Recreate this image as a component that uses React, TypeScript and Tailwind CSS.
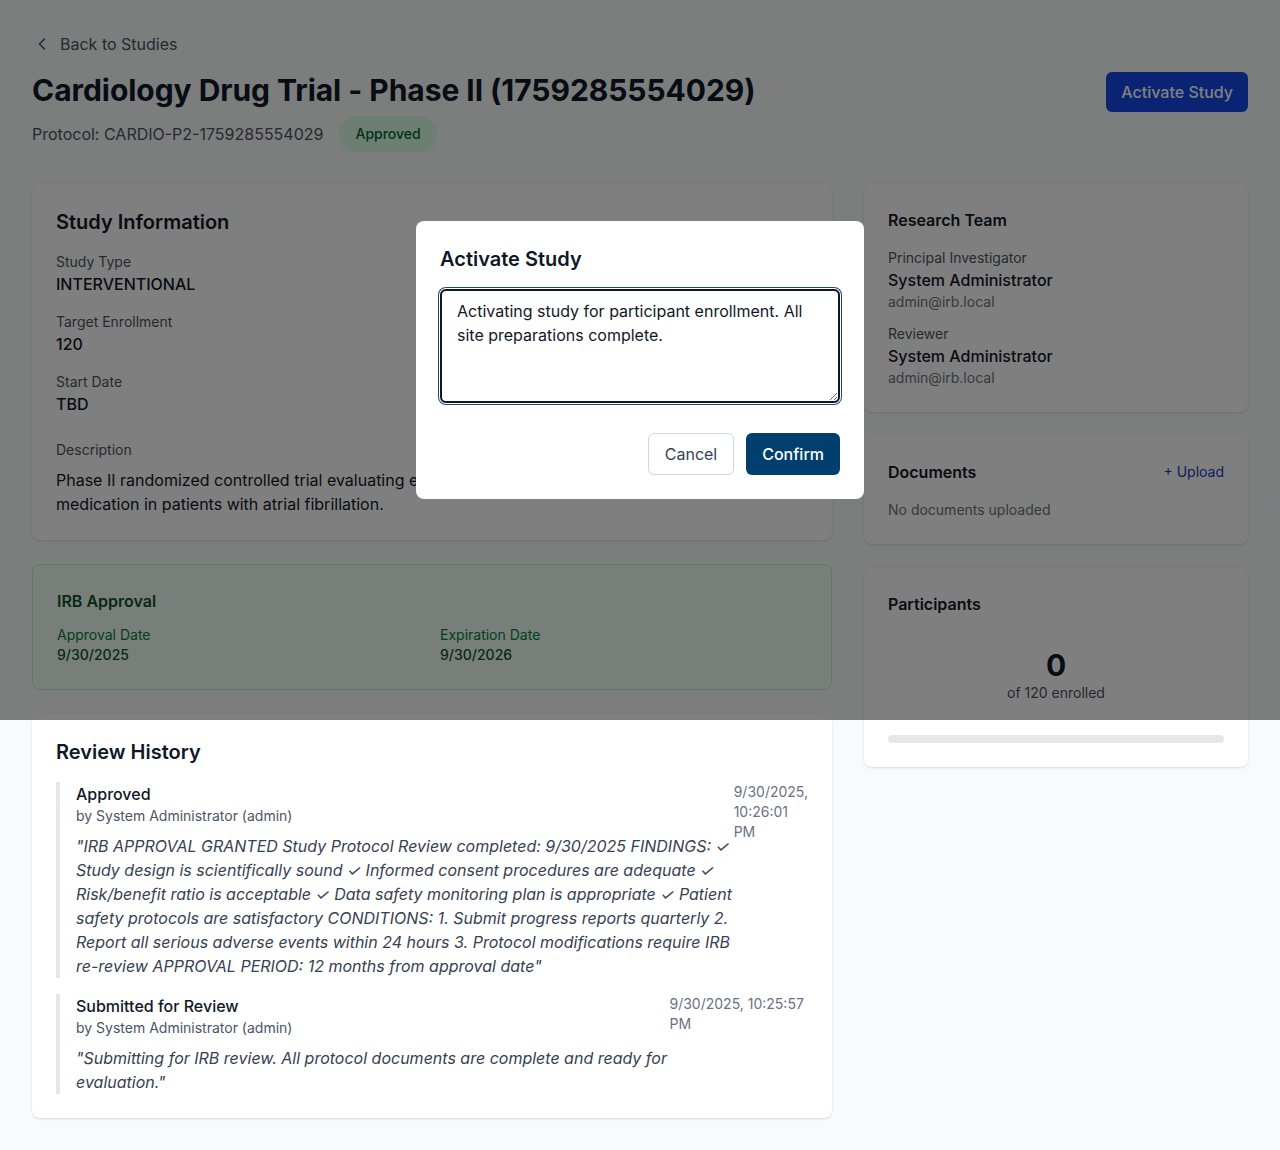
import React from "react";
import { ChevronLeft } from "lucide-react";

export default function App() {
  return (
    <div
      className="relative min-h-screen bg-gray-50 text-gray-900"
      style={{ fontFamily: "Inter, 'Noto Sans', sans-serif" }}
    >
      <div className="px-8 py-8">
        {/* Back link */}
        <div className="flex items-center text-base text-gray-600">
          <ChevronLeft size={20} className="mr-2" />
          <span>Back to Studies</span>
        </div>

        {/* Header */}
        <div className="mt-4 mb-8 flex items-start justify-between">
          <div>
            <h1 className="text-3xl font-bold tracking-[-0.05px] text-gray-900">
              Cardiology Drug Trial - Phase II (1759285554029)
            </h1>
            <div className="mt-2 flex items-center">
              <span className="text-base text-gray-600">Protocol: CARDIO-P2-1759285554029</span>
              <span className="ml-4 rounded-full bg-green-100 px-4 py-2 text-sm font-medium text-green-800">
                Approved
              </span>
            </div>
          </div>
          <button className="rounded-md bg-blue-700 px-[15px] py-2 text-base font-medium text-white">
            Activate Study
          </button>
        </div>

        {/* Main grid */}
        <div className="grid grid-cols-3 items-start gap-8">
          <div className="col-span-2 space-y-6">
            {/* Study Information */}
            <div className="rounded-lg bg-white p-6 shadow-sm">
              <h2 className="mb-4 text-xl font-semibold">Study Information</h2>
              <div className="space-y-4">
                <div>
                  <div className="text-sm text-gray-600">Study Type</div>
                  <div className="text-base font-medium">INTERVENTIONAL</div>
                </div>
                <div>
                  <div className="text-sm text-gray-600">Target Enrollment</div>
                  <div className="text-base font-medium">120</div>
                </div>
                <div>
                  <div className="text-sm text-gray-600">Start Date</div>
                  <div className="text-base font-medium">TBD</div>
                </div>
              </div>
              <div className="mt-6">
                <div className="text-sm text-gray-600">Description</div>
                <p className="mt-2 text-base leading-6 text-gray-900">
                  Phase II randomized controlled trial evaluating efficacy and safety of novel oral anticoagulant
                  medication in patients with atrial fibrillation.
                </p>
              </div>
            </div>

            {/* IRB Approval */}
            <div className="rounded-lg border border-green-200 bg-green-50 p-6">
              <h3 className="mb-3 text-base font-semibold text-green-900">IRB Approval</h3>
              <div className="grid grid-cols-2 gap-4">
                <div>
                  <div className="text-sm text-green-700">Approval Date</div>
                  <div className="text-sm font-medium text-green-900">9/30/2025</div>
                </div>
                <div>
                  <div className="text-sm text-green-700">Expiration Date</div>
                  <div className="text-sm font-medium text-green-900">9/30/2026</div>
                </div>
              </div>
            </div>

            {/* Review History */}
            <div className="rounded-lg bg-white p-6 shadow-sm">
              <h2 className="mb-4 text-xl font-semibold">Review History</h2>
              <div className="space-y-4">
                <div className="border-l-4 border-gray-200 pl-4">
                  <div className="flex justify-between">
                    <div>
                      <div className="text-base font-medium">Approved</div>
                      <div className="text-sm text-gray-600">by System Administrator (admin)</div>
                      <p className="mt-2 text-base italic leading-6 text-gray-700">
                        "IRB APPROVAL GRANTED Study Protocol Review completed: 9/30/2025 FINDINGS: ✓ Study design is
                        scientifically sound ✓ Informed consent procedures are adequate ✓ Risk/benefit ratio is
                        acceptable ✓ Data safety monitoring plan is appropriate ✓ Patient safety protocols are
                        satisfactory CONDITIONS: 1. Submit progress reports quarterly 2. Report all serious adverse
                        events within 24 hours 3. Protocol modifications require IRB re-review APPROVAL PERIOD: 12
                        months from approval date"
                      </p>
                    </div>
                    <div className="text-sm text-gray-500">9/30/2025, 10:26:01 PM</div>
                  </div>
                </div>
                <div className="border-l-4 border-gray-200 pl-4">
                  <div className="flex justify-between">
                    <div>
                      <div className="text-base font-medium">Submitted for Review</div>
                      <div className="text-sm text-gray-600">by System Administrator (admin)</div>
                      <p className="mt-2 text-base italic leading-6 text-gray-700">
                        "Submitting for IRB review. All protocol documents are complete and ready for evaluation."
                      </p>
                    </div>
                    <div className="text-sm text-gray-500">9/30/2025, 10:25:57 PM</div>
                  </div>
                </div>
              </div>
            </div>
          </div>

          {/* Right column */}
          <div className="space-y-6">
            <div className="rounded-lg bg-white p-6 shadow-sm">
              <h3 className="mb-4 text-base font-semibold">Research Team</h3>
              <div className="space-y-3">
                <div>
                  <div className="text-sm text-gray-600">Principal Investigator</div>
                  <div className="text-base font-medium">System Administrator</div>
                  <div className="text-sm text-gray-500">admin@irb.local</div>
                </div>
                <div>
                  <div className="text-sm text-gray-600">Reviewer</div>
                  <div className="text-base font-medium">System Administrator</div>
                  <div className="text-sm text-gray-500">admin@irb.local</div>
                </div>
              </div>
            </div>

            <div className="rounded-lg bg-white p-6 shadow-sm">
              <div className="mb-4 flex items-center justify-between">
                <h3 className="text-base font-semibold">Documents</h3>
                <span className="text-sm text-blue-800">+ Upload</span>
              </div>
              <div className="text-sm text-gray-500">No documents uploaded</div>
            </div>

            <div className="rounded-lg bg-white p-6 shadow-sm">
              <h3 className="text-base font-semibold">Participants</h3>
              <div className="mt-[31px] text-center">
                <div className="text-3xl font-bold">0</div>
                <div className="text-sm text-gray-600">of 120 enrolled</div>
              </div>
              <div className="mt-8 h-2 w-full rounded-full bg-gray-200" />
            </div>
          </div>
        </div>
      </div>

      {/* Modal overlay */}
      <div className="absolute left-0 top-0 flex h-[720px] w-full items-center justify-center bg-black/50">
        <div className="w-[448px] rounded-lg bg-white p-6">
          <h3 className="text-xl font-semibold text-gray-900">Activate Study</h3>
          <textarea
            rows={4}
            readOnly
            className="mt-4 block h-[114px] w-full resize-y rounded-md border-2 border-gray-900 px-[15px] py-2 text-base leading-6 text-gray-900 shadow-[0_0_0_1px_white,0_0_0_2px_#1e4a70] outline-none"
            defaultValue="Activating study for participant enrollment. All site preparations complete."
          />
          <div className="mt-[30px] flex justify-end gap-3">
            <button className="rounded-md border border-gray-300 bg-white px-4 py-2 text-base text-gray-700">
              Cancel
            </button>
            <button className="rounded-md bg-[#003f6e] px-4 py-2 text-base font-medium text-white">
              Confirm
            </button>
          </div>
        </div>
      </div>
    </div>
  );
}
